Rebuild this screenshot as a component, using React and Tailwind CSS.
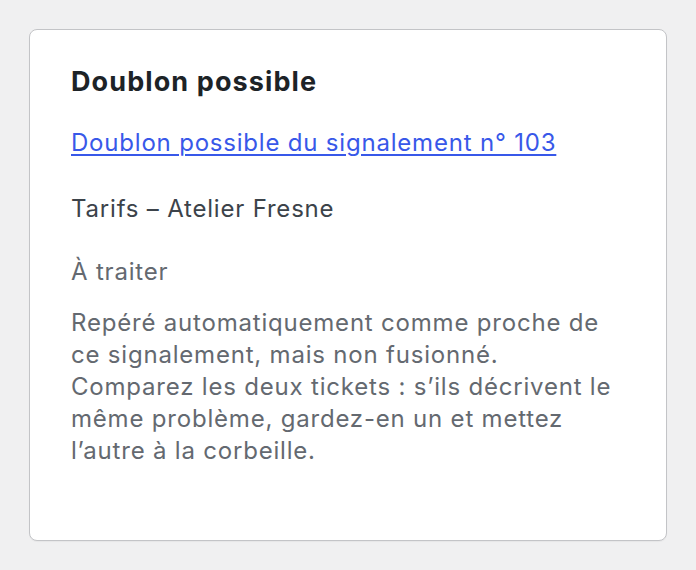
export default function App() {
  return (
    <div className="min-h-[570px] bg-[#f0f0f1] p-[29px]" style={{ fontFamily: 'Inter, "Noto Sans", sans-serif' }}>
      <div className="h-[512px] rounded-lg border border-[#c3c4c7] bg-white px-[41px] pt-[36px] shadow-[0_1px_1px_rgba(0,0,0,0.04)]">
        <h2 className="text-[27px] font-bold leading-[32px] tracking-[1.1px] text-[#1d2327]">Doublon possible</h2>
        <a href="#" className="mt-[29px] block text-[24px] leading-[32px] tracking-[0.8px] text-[#3858e9] underline decoration-[1.5px] underline-offset-[3px]">
          Doublon possible du signalement n° 103
        </a>
        <p className="mt-[34px] text-[24px] leading-[32px] tracking-[0.8px] text-[#3c434a]">Tarifs – Atelier Fresne</p>
        <p className="mt-[31px] text-[24px] leading-[32px] tracking-[0.8px] text-[#646970]">À traiter</p>
        <p className="mt-[19px] text-[24px] leading-[32px] tracking-[0.8px] text-[#646970]">
          Repéré automatiquement comme proche de
          <br />
          ce signalement, mais non fusionné.
          <br />
          Comparez les deux tickets : s’ils décrivent le
          <br />
          même problème, gardez-en un et mettez
          <br />
          l’autre à la corbeille.
        </p>
      </div>
    </div>
  );
}
